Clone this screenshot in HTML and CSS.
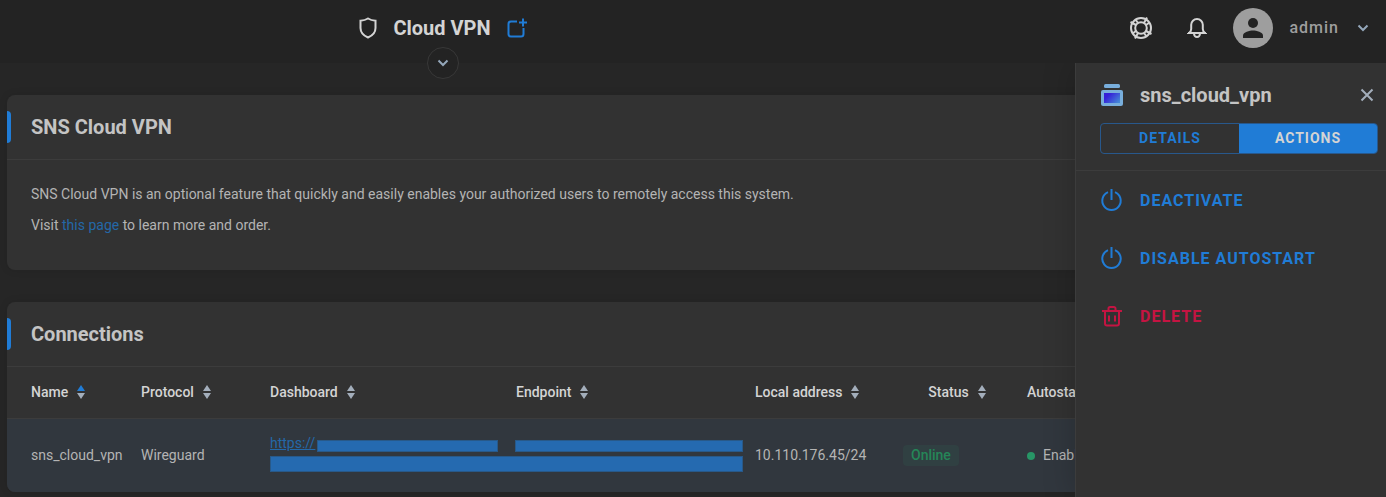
FILE: index.html
```
<!DOCTYPE html>
<html lang="en">
<head>
    <meta charset="UTF-8">
    <meta name="viewport" content="width=device-width, initial-scale=1.0">
    <title>Cloud VPN</title>
    <link rel="stylesheet" href="styles.css">
</head>
<body>
    <header class="topbar">
        <div class="topbar-title">
            <svg class="shield" width="18" height="22" viewBox="0 0 18 22"><path d="M9 1.500c2.400 1.500 4.800 2 7.500 2.200v7.300c0 4.700-3 7.600-7.500 9.500-4.500-1.900-7.500-4.800-7.500-9.500V3.700C4.200 3.500 6.600 3 9 1.500z"/></svg>
            <h1>Cloud VPN</h1>
            <button class="icon-btn add" aria-label="Add connection">
                <svg width="20" height="20" viewBox="0 0 20 20"><path d="M10 3.500H4a2.500 2.500 0 0 0-2.500 2.500v10A2.500 2.500 0 0 0 4 18.500h10a2.500 2.500 0 0 0 2.500-2.500v-6M12 4.500h8M16 .5v8"/></svg>
            </button>
            <button class="toggle" aria-label="Expand">
                <svg class="chevron" width="12" height="8" viewBox="0 0 12 8"><path d="M1.500 1.500L6 6l4.500-4.500"/></svg>
            </button>
        </div>
        <div class="topbar-user">
            <button class="icon-btn" aria-label="Help">
                <svg width="24" height="24" viewBox="0 0 24 24"><circle cx="12" cy="12" r="10"/><circle cx="12" cy="12" r="5.800"/><path d="M18 1.500l-3 5.500M20.500 6.500L17 9M22.500 18L17 15M17.500 20.500L15 17M6 22.500L9 17M3.500 17.500L7 15M1.500 6L7 9M6.500 3.500L9 7"/></svg>
            </button>
            <button class="icon-btn" aria-label="Notifications">
                <svg width="20" height="22" viewBox="0 0 20 22"><path d="M2 16c1.500-1 2.200-2 2.200-4V7.800a5.800 5.800 0 0 1 11.600 0V12c0 2 .7 3 2.200 4zM1 16h18M7 16.500a3 3.500 0 0 0 6 0"/></svg>
            </button>
            <button class="account">
                <svg class="avatar" width="40" height="40" viewBox="0 0 40 40"><circle cx="20" cy="20" r="20" fill="#9e9e9e"/><circle cx="20" cy="15" r="5" fill="#232323"/><path d="M10 30v-2.500c0-3.300 6.700-5 10-5s10 1.700 10 5V30z" fill="#232323"/></svg>
                <span>admin</span>
                <svg class="chevron" width="12" height="8" viewBox="0 0 12 8"><path d="M1.500 1.500L6 6l4.500-4.500"/></svg>
            </button>
        </div>
    </header>

    <div class="page">
        <main>
            <section class="card">
                <h2>SNS Cloud VPN</h2>
                <div class="card-body">
                    <p>SNS Cloud VPN is an optional feature that quickly and easily enables your authorized users to remotely access this system.</p>
                    <p>Visit <a href="#">this page</a> to learn more and order.</p>
                </div>
            </section>

            <section class="card">
                <h2>Connections</h2>
                <table>
                    <colgroup>
                        <col class="col-name">
                        <col class="col-protocol">
                        <col class="col-dashboard">
                        <col class="col-endpoint">
                        <col class="col-address">
                        <col class="col-status">
                        <col>
                    </colgroup>
                    <thead>
                        <tr>
                            <th><button class="sort asc">Name <i></i></button></th>
                            <th><button class="sort">Protocol <i></i></button></th>
                            <th><button class="sort">Dashboard <i></i></button></th>
                            <th><button class="sort">Endpoint <i></i></button></th>
                            <th><button class="sort">Local address <i></i></button></th>
                            <th class="center"><button class="sort">Status <i></i></button></th>
                            <th><button class="sort">Autostart <i></i></button></th>
                        </tr>
                    </thead>
                    <tbody>
                        <tr>
                            <td>sns_cloud_vpn</td>
                            <td>Wireguard</td>
                            <td class="links" colspan="2">
                                <div class="masked">
                                    <div class="masked-url"><a href="#">https://</a><span class="mask"></span></div>
                                    <span class="mask"></span>
                                    <span class="mask wide"></span>
                                </div>
                            </td>
                            <td>10.110.176.45/24</td>
                            <td><span class="badge">Online</span></td>
                            <td><span class="dot"></span>Enabled</td>
                        </tr>
                    </tbody>
                </table>
            </section>
        </main>

        <aside class="panel">
            <div class="panel-head">
                <div class="panel-title">
                    <svg width="24" height="24" viewBox="0 0 24 24">
                        <defs><linearGradient id="g" x1="0" y1="0.200" x2="1" y2="0.800"><stop offset="0.200" stop-color="#3520d8"/><stop offset="1" stop-color="#4388d8"/></linearGradient></defs>
                        <rect x="4" y="1" width="16" height="4" rx="1.500" fill="#78aedc"/>
                        <rect x="1" y="7" width="22" height="16" rx="2" fill="#78aedc"/>
                        <rect x="4" y="10" width="16" height="10" fill="url(#g)"/>
                    </svg>
                    <h2>sns_cloud_vpn</h2>
                    <button class="icon-btn close" aria-label="Close">
                        <svg width="14" height="14" viewBox="0 0 14 14"><path d="M1.500 1.500l11 11M12.500 1.500l-11 11"/></svg>
                    </button>
                </div>
                <div class="tabs">
                    <button>Details</button>
                    <button class="active">Actions</button>
                </div>
            </div>
            <div class="actions">
                <button>
                    <svg width="24" height="24" viewBox="0 0 24 24"><path d="M8 4.200a9.200 9.200 0 1 0 7 0M11.500 1v11"/></svg>
                    Deactivate
                </button>
                <button>
                    <svg width="24" height="24" viewBox="0 0 24 24"><path d="M8 4.200a9.200 9.200 0 1 0 7 0M11.500 1v11"/></svg>
                    Disable autostart
                </button>
                <button class="danger">
                    <svg width="24" height="24" viewBox="0 0 24 24"><path d="M2 7h20M5 7v12.500a2 2 0 0 0 2 2h10a2 2 0 0 0 2-2V7M8.500 7V4.500a1.500 1.500 0 0 1 1.500-1.500h4A1.500 1.500 0 0 1 15.500 4.500V7M9 11.500v6M15 11.500v6"/></svg>
                    Delete
                </button>
            </div>
        </aside>
    </div>
</body>
</html>
```
FILE: styles.css
```
* { box-sizing: border-box; }

body {
    display: flex;
    flex-direction: column;
    min-height: 100vh;
    margin: 0;
    background: #262626;
    color: #b4b4b4;
    font-family: Roboto, sans-serif;
    font-size: 14px;
}

h1, h2, p { margin: 0; }
h1, h2 { font-size: 20px; font-weight: 700; }
a { color: #2468a8; text-decoration: none; }
button {
    padding: 0;
    border: none;
    background: none;
    color: inherit;
    font: inherit;
    cursor: pointer;
}
svg { display: block; fill: none; stroke: none; }

/* top bar */
.topbar {
    display: flex;
    height: 63px;
    background: #232323;
    color: #d4d4d4;
}
.topbar-title {
    position: relative;
    display: flex;
    flex: 1;
    align-items: center;
    justify-content: center;
    gap: 16px;
    padding-bottom: 8px;
}
.shield { stroke: #d4d4d4; stroke-width: 2; }
.icon-btn svg { stroke: #d4d4d4; stroke-width: 2; }
.add svg { stroke: #207cd6; }
.toggle {
    position: absolute;
    top: 47px;
    left: 50%;
    z-index: 1;
    display: flex;
    align-items: center;
    justify-content: center;
    width: 32px;
    height: 32px;
    margin-left: -16px;
    border: 1px solid #383838;
    border-radius: 50%;
    background: #232323;
}
.chevron { stroke: #94a7ba; stroke-width: 2; }
.topbar-user {
    display: flex;
    align-items: center;
    justify-content: flex-end;
    gap: 34px;
    width: 500px;
    padding: 0 17px 8px 0;
}
.account {
    display: flex;
    align-items: center;
    gap: 16px;
    margin-left: -8px;
    color: #9e9e9e;
    font-size: 16px;
    font-weight: 500;
    letter-spacing: 1px;
}
.account .chevron { margin-left: 2px; }

/* cards */
.page {
    position: relative;
    flex: 1;
}
main { padding: 32px 7px 0; }
.card {
    margin-bottom: 32px;
    overflow: hidden;
    border-radius: 8px;
    background: #323232;
    box-shadow: 0 0 8px rgba(0, 0, 0, 0.1);
}
.card:last-child { margin-bottom: 0; }
.card h2 {
    display: flex;
    align-items: center;
    height: 65px;
    border-bottom: 1px solid #3c3c3c;
    color: #c4c4c4;
}
.card h2::before {
    content: "";
    width: 4px;
    height: 32px;
    margin-right: 20px;
    border-radius: 0 4px 4px 0;
    background: #207cd6;
}
.card-body { padding: 24px; }
.card-body p { margin-bottom: 10px; line-height: 21px; }

/* connections table */
table {
    width: 100%;
    border-collapse: collapse;
    table-layout: fixed;
}
.col-name { width: 126px; }
.col-protocol { width: 129px; }
.col-dashboard { width: 246px; }
.col-endpoint { width: 239px; }
.col-address { width: 148px; }
.col-status { width: 124px; }
th, td { padding: 0 8px; text-align: left; white-space: nowrap; }
th:first-child, td:first-child { padding-left: 24px; }
th { height: 51px; border-bottom: 1px solid #3c3c3c; color: #d4d4d4; font-weight: 500; }
th.center { text-align: center; }
td { height: 74px; background: #31373e; }
.links { padding: 0 4px 2px 8px; }
.sort { display: inline-flex; align-items: center; gap: 9px; }
.sort i { display: grid; gap: 2px; }
.sort i::before, .sort i::after {
    content: "";
    border: 4px solid transparent;
}
.sort i::before { border-top: none; border-bottom: 6px solid #a3aebb; }
.sort i::after { border-bottom: none; border-top: 6px solid #a3aebb; }
.sort.asc i::before { border-bottom-color: #207cd6; }
.masked {
    display: grid;
    grid-template-columns: 228px 1fr;
    gap: 4px 17px;
}
.masked-url { display: flex; align-items: flex-end; gap: 2px; height: 16px; }
.masked-url a { line-height: 18px; text-decoration: underline; }
.masked-url .mask { flex: 1; }
.mask {
    align-self: end;
    height: 12px;
    border: 1px solid #285989;
    background: #256ab0;
}
.mask.wide { grid-column: span 2; height: 16px; }
.badge {
    display: inline-block;
    padding: 0 8px;
    border-radius: 4px;
    background: #304042;
    color: #258658;
    font-weight: 500;
    line-height: 21px;
}
.dot {
    display: inline-block;
    width: 8px;
    height: 8px;
    margin-right: 8px;
    border-radius: 50%;
    background: #279566;
}

/* side panel, slides over the page */
.panel {
    position: absolute;
    top: 0;
    right: 0;
    bottom: 0;
    width: 311px;
    border-left: 1px solid #3c3c3c;
    background: #323232;
    box-shadow: 0 0 32px rgba(0, 0, 0, 0.2);
    clip-path: inset(0 0 0 -32px);
}
.panel-head { padding: 0 8px 16px 24px; border-bottom: 1px solid #3c3c3c; }
.panel-title {
    display: flex;
    align-items: center;
    gap: 16px;
    height: 60px;
    padding-top: 4px;
    color: #c4c4c4;
}
.close { margin: 0 4px 0 auto; }
.close svg { stroke: #a3aebb; }
.tabs {
    display: flex;
    overflow: hidden;
    border: 1px solid #28588c;
    border-radius: 4px;
}
.tabs button {
    flex: 1;
    height: 29px;
    padding-bottom: 2px;
    color: #207cd6;
    font-weight: 700;
    letter-spacing: 1px;
    text-transform: uppercase;
}
.tabs .active { background: #207cd6; color: #d4d4d4; }
.actions {
    display: flex;
    flex-direction: column;
    align-items: flex-start;
    gap: 34px;
    padding: 17px 24px;
}
.actions button {
    display: flex;
    align-items: center;
    gap: 16px;
    color: #207cd6;
    font-size: 16px;
    font-weight: 700;
    letter-spacing: 1px;
    text-transform: uppercase;
}
.actions svg { stroke: currentColor; stroke-width: 2; }
.actions .danger { color: #c41442; }
```
